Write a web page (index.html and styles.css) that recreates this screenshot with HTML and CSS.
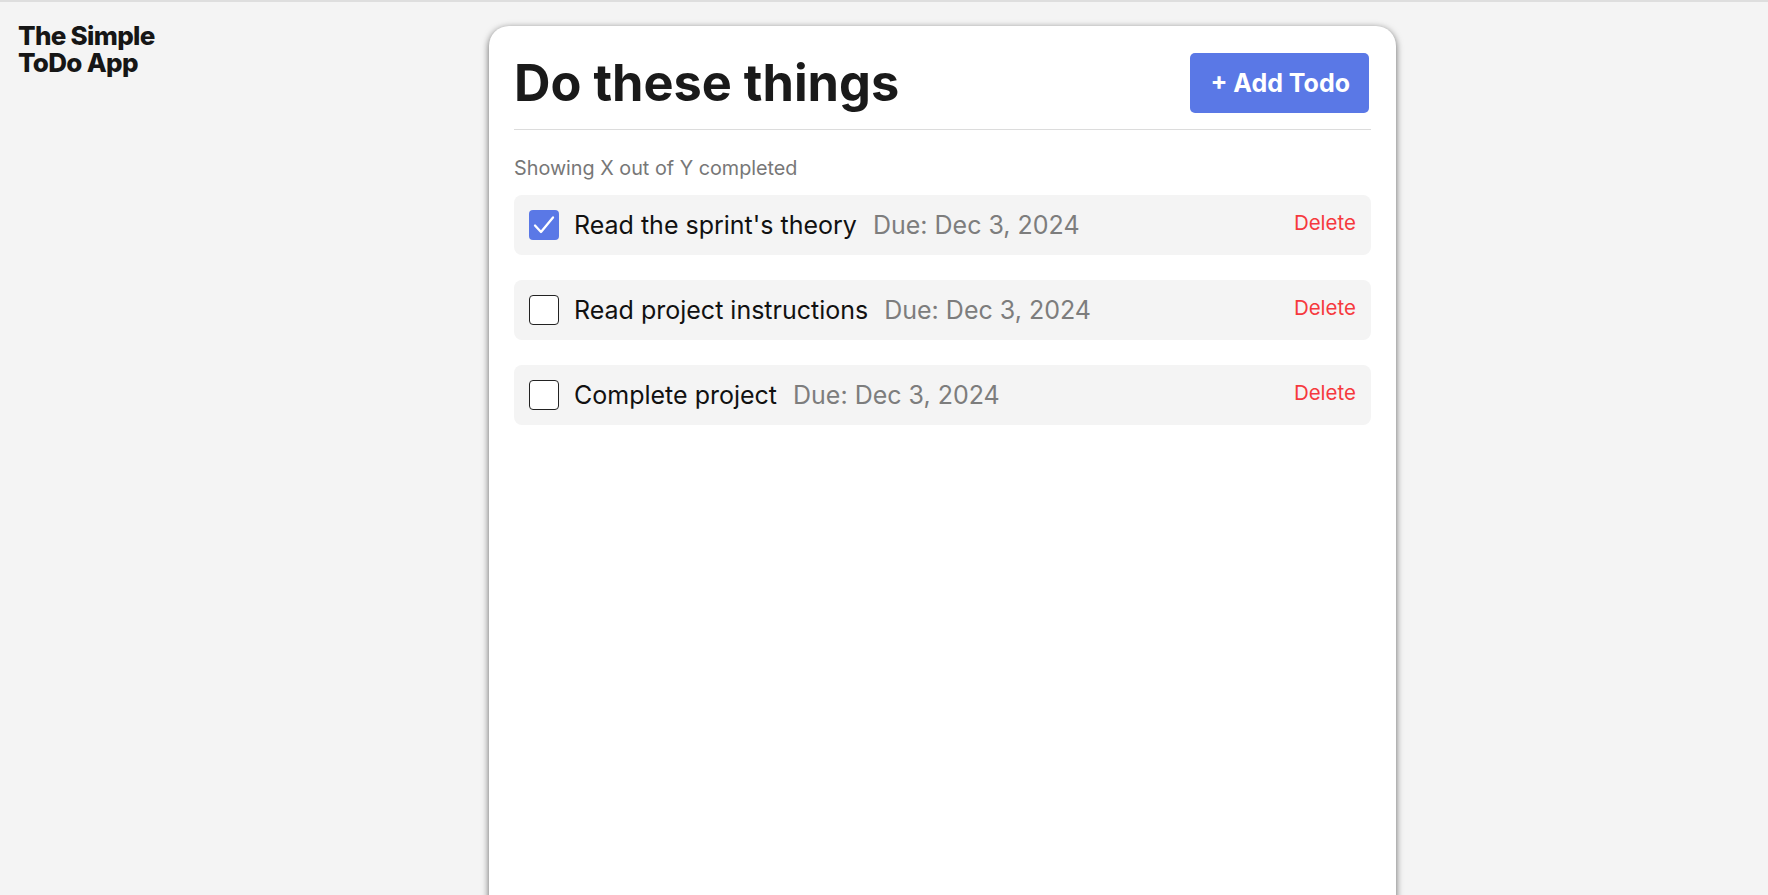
FILE: index.html
```html
<!DOCTYPE html>
<html lang="en">
<head>
<meta charset="utf-8">
<title>The Simple ToDo App</title>
<link rel="stylesheet" href="styles.css">
</head>
<body>
<div class="layout">
  <aside class="sidebar">
    <div class="logo"><div>The Simple</div><div>ToDo App</div></div>
  </aside>
  <main class="card">
    <header class="card-header">
      <h1 class="title">Do these things</h1>
      <button class="add-btn">+ Add Todo</button>
    </header>
    <p class="counter">Showing X out of Y completed</p>
    <ul class="todos">
      <li class="todo">
        <span class="check checked"><svg viewBox="0 0 30 30" width="30" height="30"><path d="M6 15.5 L12 22 L24 7.5" fill="none" stroke="#fff" stroke-width="2.3" stroke-linecap="round" stroke-linejoin="round"/></svg></span>
        <span class="todo-name">Read the sprint's theory</span>
        <span class="todo-due">Due: Dec 3, 2024</span>
        <button class="delete">Delete</button>
      </li>
      <li class="todo">
        <span class="check"></span>
        <span class="todo-name">Read project instructions</span>
        <span class="todo-due">Due: Dec 3, 2024</span>
        <button class="delete">Delete</button>
      </li>
      <li class="todo">
        <span class="check"></span>
        <span class="todo-name">Complete project</span>
        <span class="todo-due">Due: Dec 3, 2024</span>
        <button class="delete">Delete</button>
      </li>
    </ul>
  </main>
</div>
</body>
</html>
```

FILE: styles.css
```css
* { box-sizing: border-box; }

html, body {
  margin: 0;
  padding: 0;
  background: #f4f4f4;
  font-family: Inter, "Noto Sans", Arial, sans-serif;
  color: #1a1a1a;
}

body {
  border-top: 2px solid #dedede;
  overflow: hidden;
  height: 895px;
}

.layout {
  display: grid;
  grid-template-columns: 489px 907px;
  align-items: start;
}

.sidebar {
  padding: 20px 0 0 18px;
}

.logo {
  font-size: 26px;
  font-weight: 800;
  line-height: 27px;
  letter-spacing: -0.7px;
  color: #161616;
}

.card {
  margin-top: 24px;
  background: #fff;
  border-radius: 20px;
  box-shadow: 0 2px 7px rgba(0, 0, 0, 0.6);
  min-height: 1000px;
  padding: 27px 25px 25px 25px;
}

.card-header {
  display: flex;
  align-items: center;
  justify-content: space-between;
  padding-bottom: 16px;
  border-bottom: 1px solid #dcdcdc;
}

.title {
  margin: 0;
  font-size: 50.5px;
  line-height: 60px;
  font-weight: 700;
  color: #1a1a1a;
}

.add-btn {
  height: 60px;
  padding: 0 19px 0 20px;
  margin-right: 2px;
  border: none;
  border-radius: 5px;
  background: #5a78e6;
  color: #fff;
  font-family: inherit;
  font-size: 25px;
  font-weight: 700;
}

.counter {
  margin: 26px 0 15px 0;
  font-size: 19.8px;
  line-height: 24px;
  color: #777;
}

.todos {
  list-style: none;
  margin: 0;
  padding: 0;
  display: flex;
  flex-direction: column;
  gap: 25px;
}

.todo {
  display: flex;
  align-items: center;
  height: 60px;
  padding: 0 15px 0 15px;
  background: #f4f4f4;
  border-radius: 8px;
}

.check {
  width: 30px;
  height: 30px;
  flex: none;
  border: 1px solid #222;
  border-radius: 4px;
  background: #fff;
  margin-right: 15px;
  display: flex;
}

.check.checked {
  border: none;
  background: #5a78e6;
}

.todo-name {
  font-size: 25px;
  color: #111;
}

.todo-due {
  margin-left: 16px;
  font-size: 25px;
  color: #7d7d7d;
}

.delete {
  margin-left: auto;
  align-self: flex-start;
  margin-top: 15px;
  padding: 0;
  border: none;
  background: none;
  font-family: inherit;
  font-size: 20.5px;
  color: #f6393d;
}
```
